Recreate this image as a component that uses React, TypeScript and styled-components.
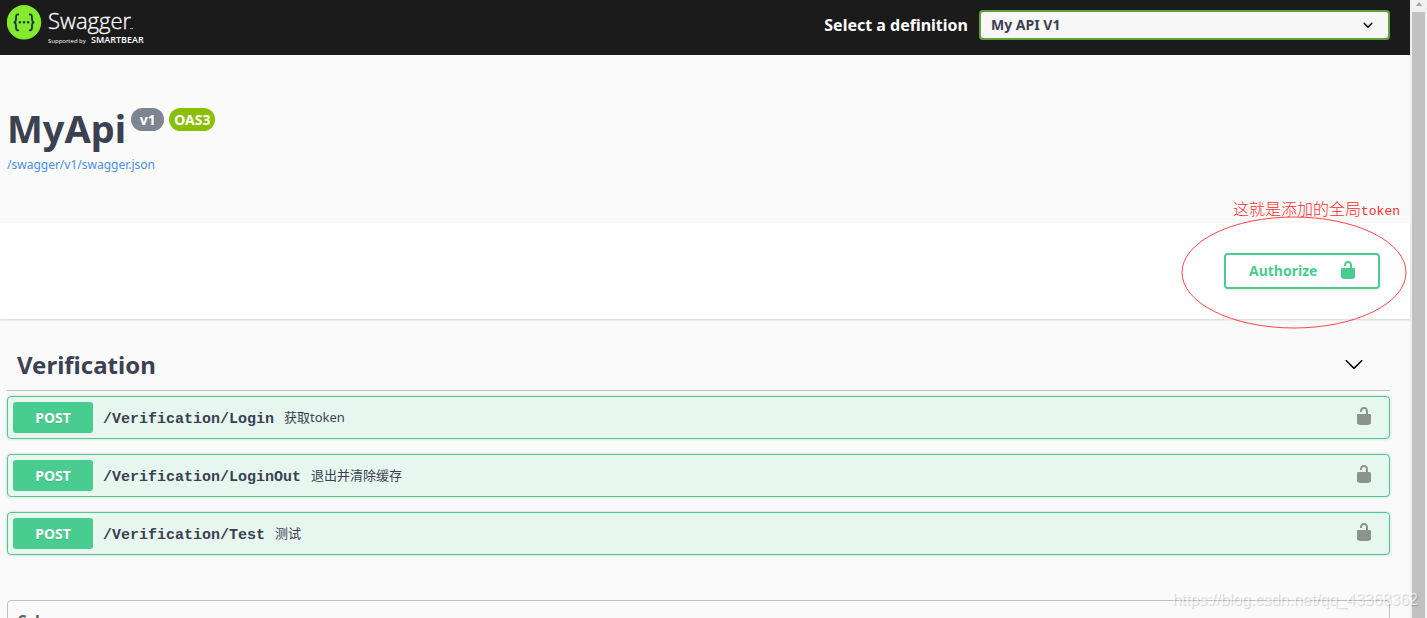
import React from "react";
import styled, { createGlobalStyle } from "styled-components";

const GlobalStyle = createGlobalStyle`
  * { box-sizing: border-box; }
  body { margin: 0; background: #fafafa; color: #3b4151; font-family: "Noto Sans", "Noto Sans CJK SC", sans-serif; }
`;

const Window = styled.div`
  position: relative;
  display: flex;
  height: 100vh;
  overflow: hidden;
`;

const Page = styled.main`
  flex: 1;
  min-width: 0;
  background: #fafafa;
`;

const ScrollTrack = styled.div`
  display: flex;
  flex-direction: column;
  align-items: center;
  width: 17px;
  background: #f1f1f1;
`;

const ScrollArrow = styled.svg`
  flex: none;
  width: 12px;
  height: 12px;
`;

const ScrollThumb = styled.div`
  flex: 1;
  width: 13px;
  background: #c1c1c1;
`;

const TopBar = styled.header`
  display: flex;
  justify-content: space-between;
  height: 55px;
  padding: 0 20px 0 7px;
  background: #1b1b1b;
`;

const LogoLink = styled.a`
  display: block;
  height: 50px;
`;

const Definition = styled.label`
  display: flex;
  align-items: center;
  gap: 11px;
  height: 50px;
  color: #fff;
  font-size: 16px;
  font-weight: 700;
`;

const SelectBox = styled.span`
  position: relative;
  width: 411px;
  height: 30px;
`;

const Select = styled.select`
  appearance: none;
  width: 100%;
  height: 30px;
  padding: 0 40px 2px 10px;
  border: 2px solid #62a03f;
  border-radius: 4px;
  background: #f7f7f7;
  color: #3b4151;
  font: 700 14px "Noto Sans", sans-serif;
`;

const SelectArrow = styled.svg`
  position: absolute;
  top: 5px;
  right: 12px;
  width: 20px;
  height: 20px;
  pointer-events: none;
`;

const Info = styled.section`
  height: 168px;
  padding: 50px 7px 0;
`;

const TitleRow = styled.div`
  display: flex;
  align-items: flex-start;
  gap: 5px;
  height: 51px;
`;

const Title = styled.h1`
  margin: 0;
  font-size: 38px;
  line-height: 46px;
  font-weight: 700;
`;

const Badge = styled.span<{ $color: string }>`
  min-width: 33px;
  margin-top: 3px;
  padding: 0 5px;
  border-radius: 12px;
  background: ${(p) => p.$color};
  color: #fff;
  font-size: 14px;
  line-height: 23px;
  font-weight: 700;
  text-align: center;
`;

const SpecLink = styled.a`
  display: block;
  color: #4990e2;
  font-size: 12px;
  line-height: 18px;
  text-decoration: none;
`;

const Scheme = styled.section`
  position: relative;
  display: flex;
  justify-content: flex-end;
  padding: 30px 30px 30px 7px;
  background: #fff;
  box-shadow: 0 1px 2px rgba(0, 0, 0, 0.15);
`;

const AuthorizeButton = styled.button`
  display: flex;
  align-items: center;
  justify-content: space-between;
  width: 156px;
  height: 36px;
  padding: 0 20px 2px 23px;
  border: 2px solid #49cc90;
  border-radius: 4px;
  background: transparent;
  box-shadow: 0 1px 2px rgba(0, 0, 0, 0.1);
  color: #49cc90;
  font: 700 14px "Noto Sans", sans-serif;
`;

const NoteText = styled.p`
  position: absolute;
  right: 10px;
  top: -25px;
  margin: 0;
  color: #ff2d2d;
  font: 300 16px/20px "Noto Sans CJK SC", sans-serif;
  white-space: nowrap;
`;

const NoteLatin = styled.span`
  font-family: "Liberation Mono", monospace;
  font-size: 13px;
`;

const NoteRing = styled.svg`
  position: absolute;
  right: 3px;
  top: -7px;
  width: 226px;
  height: 113px;
  pointer-events: none;
`;

const Operations = styled.section`
  padding: 20px 20px 0 7px;
`;

const TagHeading = styled.h2`
  display: flex;
  align-items: center;
  justify-content: space-between;
  height: 52px;
  margin: 0 0 5px;
  padding: 0 26px 0 10px;
  border-bottom: 1px solid #bbbdc1;
  font-size: 24px;
  font-weight: 700;
`;

const IconButton = styled.button`
  display: flex;
  padding: 0 0 2px;
  border: 0;
  background: none;
  color: #000;
`;

const OperationList = styled.div`
  display: flex;
  flex-direction: column;
  gap: 15px;
`;

const Operation = styled.article`
  display: flex;
  align-items: center;
  height: 43px;
  padding: 0 15px 0 5px;
  border: 1px solid #49cc90;
  border-radius: 4px;
  background: #e8f6f0;
  box-shadow: 0 0 3px rgba(0, 0, 0, 0.19);
`;

const Method = styled.span`
  width: 80px;
  border-radius: 3px;
  background: #49cc90;
  color: #fff;
  font-size: 14px;
  line-height: 31px;
  font-weight: 700;
  text-align: center;
  text-shadow: 0 1px 0 rgba(0, 0, 0, 0.1);
`;

const Path = styled.a`
  padding: 4px 10px 0;
  color: #3b4151;
  font: 700 15px/20px "Liberation Mono", monospace;
  text-decoration: none;
`;

const Summary = styled.span`
  flex: 1;
  padding-bottom: 2px;
  font-size: 13px;
  line-height: 20px;
`;

const LockButton = styled(IconButton)`
  padding: 0 0 4px;
  color: #8b938f;
`;

const Schemas = styled.section`
  height: 60px;
  margin: 45px 20px 0 7px;
  padding: 8px 10px;
  border: 1px solid #bbbdc1;
  border-radius: 4px;
`;

const SchemasTitle = styled.h3`
  margin: 0;
  color: #606060;
  font-size: 16px;
  line-height: 24px;
  font-weight: 700;
`;

const Watermark = styled.div`
  position: absolute;
  right: 9px;
  bottom: 8px;
  color: rgba(255, 255, 255, 0.7);
  font: 16px/20px "Liberation Sans", sans-serif;
  text-shadow: 1px 1px 1px rgba(0, 0, 0, 0.18);
  pointer-events: none;
`;

const Logo = () => (
  <svg width="145" height="50" viewBox="0 0 145 50" role="img" aria-label="Swagger">
    <circle cx="17" cy="22.3" r="17.2" fill="#85ea2d" />
    <g fill="none" stroke="#173647" strokeWidth="1.8">
      <path d="M12 14.4H11C9.2 14.4 9 15.6 9 17v2.3c0 1.8-.7 2.9-2.3 3 1.6.1 2.3 1.2 2.3 3v2.4c0 1.4.2 2.6 2 2.6h1" />
      <path d="M22 14.4h1c1.8 0 2 1.2 2 2.600v2.300c0 1.8.7 2.9 2.300 3-1.600.1-2.300 1.200-2.300 3v2.400c0 1.400-.2 2.600-2 2.600h-1" />
    </g>
    <g fill="#173647">
      <circle cx="12.8" cy="22.3" r="1.2" />
      <circle cx="17" cy="22.3" r="1.2" />
      <circle cx="21.2" cy="22.3" r="1.2" />
    </g>
    <g fill="#fff">
      <text x="41" y="29" fontFamily="Open Sans, sans-serif" fontSize="22" fontWeight="300" stroke="#fff" strokeWidth="0.3">Swagger</text>
      <path d="M123 28.5h3" stroke="#999" />
      <text x="41" y="43" fontFamily="Open Sans, sans-serif" fontSize="6">Supported by</text>
      <text x="84" y="43" fontFamily="Open Sans, sans-serif" fontSize="9" fontWeight="600">SMARTBEAR</text>
    </g>
  </svg>
);

const Unlocked = () => (
  <svg width="20" height="20" viewBox="0 0 20 20" fill="currentColor" aria-hidden="true">
    <path d="M15.8 8H14V5.6C14 2.703 12.665 1 10 1 7.334 1 6 2.703 6 5.6V6h2v-.801C8 3.754 8.797 3 10 3c1.203 0 2 .754 2 2.199V8H4c-.553 0-1 .646-1 1.199V17c0 .549.428 1.139.951 1.307l1.197.387C5.672 18.861 6.55 19 7.1 19h5.8c.549 0 1.428-.139 1.951-.307l1.196-.387c.524-.167.953-.757.953-1.306V9.199C17 8.646 16.352 8 15.8 8z" />
  </svg>
);

const operations = [
  { path: "/Verification/Login", summary: "获取token" },
  { path: "/Verification/LoginOut", summary: "退出并清除缓存" },
  { path: "/Verification/Test", summary: "测试" },
];

export default function App() {
  return (
    <Window>
      <GlobalStyle />
      <Page>
        <TopBar>
          <LogoLink href="#"><Logo /></LogoLink>
          <Definition htmlFor="definition">
            Select a definition
            <SelectBox>
              <Select id="definition"><option>My API V1</option></Select>
              <SelectArrow viewBox="0 0 20 20" aria-hidden="true">
                <path d="M13.418 7.859a.695.695 0 01.978 0 .68.68 0 010 .969l-3.908 3.83a.697.697 0 01-.979 0l-3.908-3.83a.68.68 0 010-.969.695.695 0 01.978 0L10 11l3.418-3.141z" />
              </SelectArrow>
            </SelectBox>
          </Definition>
        </TopBar>
        <Info>
          <TitleRow>
            <Title>MyApi</Title>
            <Badge $color="#7d8492">v1</Badge>
            <Badge $color="#89bf04">OAS3</Badge>
          </TitleRow>
          <SpecLink href="#spec">/swagger/v1/swagger.json</SpecLink>
        </Info>
        <Scheme>
          <AuthorizeButton>Authorize<Unlocked /></AuthorizeButton>
          <NoteText>这就是添加的全局<NoteLatin>token</NoteLatin></NoteText>
          <NoteRing viewBox="0 0 226 113" aria-hidden="true">
            <ellipse cx="113" cy="56.5" rx="112" ry="55.5" fill="none" stroke="#f44" />
          </NoteRing>
        </Scheme>
        <Operations>
          <TagHeading>
            Verification
            <IconButton aria-label="Collapse Verification">
              <svg width="20" height="20" viewBox="0 0 20 20" aria-hidden="true">
                <path d="M17.418 6.109c.272-.268.709-.268.979 0s.271.701 0 .969l-7.908 7.83c-.27.268-.707.268-.979 0l-7.908-7.83c-.27-.268-.27-.701 0-.969.271-.268.709-.268.979 0L10 13.25l7.418-7.141z" />
              </svg>
            </IconButton>
          </TagHeading>
          <OperationList>
            {operations.map((op) => (
              <Operation key={op.path}>
                <Method>POST</Method>
                <Path href={"#" + op.path}>{op.path}</Path>
                <Summary>{op.summary}</Summary>
                <LockButton aria-label={"Authorize " + op.path}><Unlocked /></LockButton>
              </Operation>
            ))}
          </OperationList>
        </Operations>
        <Schemas>
          <SchemasTitle>Schemas</SchemasTitle>
        </Schemas>
      </Page>
      <ScrollTrack aria-hidden="true">
        <ScrollArrow viewBox="0 0 12 12"><path d="M3 6 6 2l3 4z" fill="#a3a3a3" /></ScrollArrow>
        <ScrollThumb />
      </ScrollTrack>
      <Watermark>https://blog.csdn.net/qq_43368362</Watermark>
    </Window>
  );
}
